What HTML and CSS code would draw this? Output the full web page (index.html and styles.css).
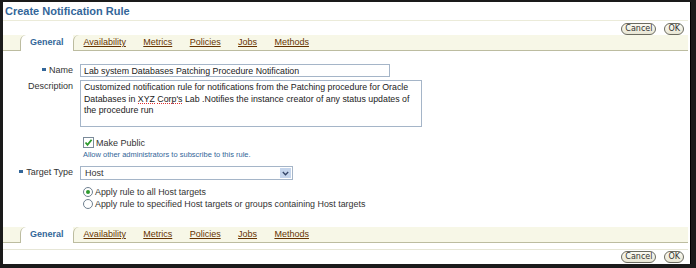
FILE: index.html
```html
<!DOCTYPE html>
<html lang="en">
<head>
<meta charset="UTF-8">
<title>Create Notification Rule</title>
<link rel="stylesheet" href="styles.css">
</head>
<body>
<div class="window">
    <div class="page-header">
        <h1>Create Notification Rule</h1>
    </div>
    <div class="button-row">
        <button class="btn">Cancel</button>
        <button class="btn">OK</button>
    </div>
    <div class="tabs">
        <span class="tab active">General</span>
        <a class="tab next" href="#">Availability</a>
        <a class="tab" href="#">Metrics</a>
        <a class="tab" href="#">Policies</a>
        <a class="tab" href="#">Jobs</a>
        <a class="tab" href="#">Methods</a>
    </div>

    <div class="form">
        <label class="label"><span class="req"></span>Name</label>
        <div class="field">
            <input class="text-input" type="text" value="Lab system Databases Patching Procedure Notification">
        </div>

        <label class="label">Description</label>
        <div class="field">
            <div class="textarea">
                <div>Customized notification rule for notifications from the Patching procedure for Oracle</div>
                <div><span>Databases in </span><span class="spell">XYZ</span><span> </span><span class="spell">Corp's</span><span> Lab .Notifies the instance creator of any status updates of</span></div>
                <div>the procedure run</div>
            </div>
        </div>

        <div class="label"></div>
        <div class="field public">
            <div class="check-row">
                <span class="checkbox"><svg width="9" height="9" viewBox="0 0 9 9"><path d="M1.5 4.5 L3.5 6.8 L7.6 1.8" fill="none" stroke="#2e9a2e" stroke-width="1.8"/></svg></span>
                <span>Make Public</span>
            </div>
            <div class="help">Allow other administrators to subscribe to this rule.</div>
        </div>

        <label class="label target"><span class="req"></span>Target Type</label>
        <div class="field target">
            <div class="select">
                <span>Host</span>
                <span class="select-arrow"><svg width="7" height="5" viewBox="0 0 7 5"><path d="M0.8 1 L3.5 3.8 L6.2 1" fill="none" stroke="#334466" stroke-width="1.3"/></svg></span>
            </div>
        </div>

        <div class="label"></div>
        <div class="field radios">
            <div class="radio-row"><span class="radio checked"></span>Apply rule to all Host targets</div>
            <div class="radio-row"><span class="radio"></span>Apply rule to specified Host targets or groups containing Host targets</div>
        </div>
    </div>

    <div class="tabs bottom">
        <span class="tab active">General</span>
        <a class="tab next" href="#">Availability</a>
        <a class="tab" href="#">Metrics</a>
        <a class="tab" href="#">Policies</a>
        <a class="tab" href="#">Jobs</a>
        <a class="tab" href="#">Methods</a>
    </div>
    <div class="button-row footer">
        <button class="btn">Cancel</button>
        <button class="btn">OK</button>
    </div>
</div>
</body>
</html>
```

FILE: styles.css
```css
body, html {
    margin: 0;
    height: 100%;
    background: #1a1a1a;
    font-family: "Liberation Sans", Arial, sans-serif;
}
.window {
    margin: 2px 5px 0 3px;
    height: 262px;
    background: #fff;
    border-right: 1px solid #000;
    padding-right: 2px;
    box-sizing: border-box;
    overflow: hidden;
}
.page-header {
    height: 18px;
    border-bottom: 1px solid #ebebd9;
    padding-left: 2px;
}
.page-header h1 {
    margin: 0;
    font-size: 11px;
    line-height: 18px;
    color: #336699;
    font-weight: bold;
}
.button-row {
    height: 14px;
    display: flex;
    justify-content: flex-end;
    align-items: flex-end;
    gap: 8px;
    padding-right: 4px;
}
.btn {
    height: 12px;
    padding: 0 3px;
    border: 1px solid #6b6b60;
    border-radius: 6px;
    background: linear-gradient(#fbfaf2, #e8e6d4);
    font-family: "DejaVu Sans", sans-serif;
    font-size: 8px;
    line-height: 10px;
    color: #333;
    box-sizing: border-box;
}
.tabs {
    height: 16px;
    background: #f7f7e7;
    border-bottom: 1px solid #bcbca0;
    box-sizing: border-box;
    display: flex;
    align-items: stretch;
    padding-left: 17px;
    font-size: 9px;
}
.tab {
    padding: 0 8.7px;
    line-height: 15px;
    color: #663300;
}
.tab.active {
    background: #fff;
    color: #336699;
    font-weight: bold;
    padding: 0 9px;
    border-left: 1px solid #bcbca0;
    border-top-left-radius: 6px;
    margin-bottom: -1px;
}
.tab.next {
    border-left: 1px solid #bcbca0;
    border-top-left-radius: 6px;
    padding-left: 10px;
}
.form {
    display: grid;
    grid-template-columns: 70px 1fr;
    column-gap: 7px;
    row-gap: 3px;
    padding-top: 13px;
    font-size: 9px;
    color: #333;
}
.label {
    text-align: right;
    line-height: 13px;
}
.req {
    display: inline-block;
    width: 4px;
    height: 3px;
    background: #336699;
    margin-right: 3px;
    vertical-align: 2px;
}
.text-input {
    display: block;
    width: 310px;
    height: 13px;
    border: 1px solid #a5b5c8;
    padding: 0 3px;
    margin: 0;
    font-family: "Liberation Sans", Arial, sans-serif;
    font-size: 8.8px;
    color: #222;
    box-sizing: border-box;
}
.textarea {
    width: 342px;
    height: 47px;
    border: 1px solid #a5b5c8;
    padding: 1px 1px 1px 3px;
    font-size: 8.8px;
    line-height: 11.5px;
    color: #222;
    box-sizing: border-box;
    white-space: nowrap;
}
.spell {
    background-image: linear-gradient(to right, #e03030 50%, transparent 50%);
    background-size: 2px 1px;
    background-repeat: repeat-x;
    background-position: 0 100%;
}
.public {
    padding-top: 7px;
}
.check-row {
    display: flex;
    align-items: center;
    gap: 2px;
    padding-left: 3px;
    height: 11px;
    font-size: 9px;
}
.checkbox {
    width: 11px;
    height: 11px;
    border: 1px solid #7a8a99;
    box-sizing: border-box;
    display: flex;
    align-items: center;
    justify-content: center;
    background: #fff;
}
.help {
    font-size: 7.5px;
    color: #336699;
    padding-left: 3px;
    margin-top: 2px;
}
.label.target,
.field.target {
    margin-top: 4px;
}
.select {
    width: 213px;
    height: 14px;
    border: 1px solid #a5b5c8;
    box-sizing: border-box;
    display: flex;
    justify-content: space-between;
    align-items: center;
    padding: 0 1px 0 4px;
}
.select-arrow {
    width: 11px;
    height: 10px;
    background: #c5d5ec;
    display: flex;
    align-items: center;
    justify-content: center;
}
.radios {
    padding-top: 3px;
    font-size: 8.9px;
}
.radio-row {
    display: flex;
    align-items: center;
    gap: 2px;
    height: 12px;
    line-height: 12px;
    padding-left: 3px;
}
.radio {
    width: 10px;
    height: 10px;
    border: 1px solid #6f8090;
    border-radius: 50%;
    box-sizing: border-box;
    position: relative;
}
.radio.checked::after {
    content: "";
    position: absolute;
    left: 2px;
    top: 2px;
    width: 4px;
    height: 4px;
    border-radius: 50%;
    background: #2e9a2e;
}
.tabs.bottom {
    margin-top: 17px;
}
.footer {
    margin-top: 6px;
    border-top: 1px solid #e6e6d6;
    height: 14px;
    align-items: center;
}
```
